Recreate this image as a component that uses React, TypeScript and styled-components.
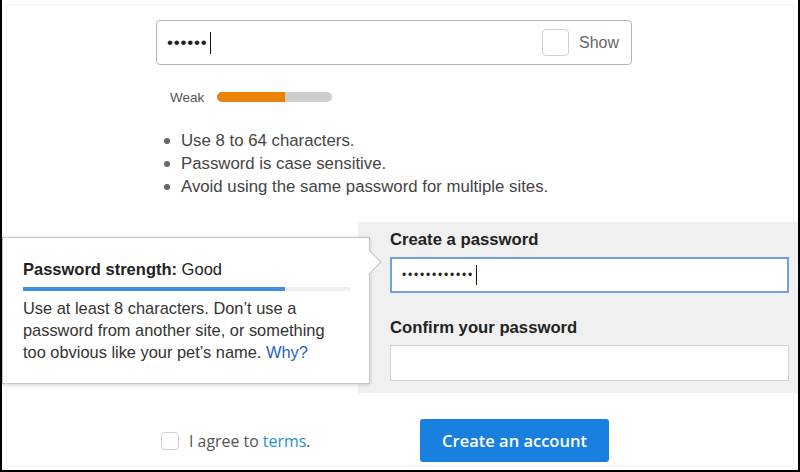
import React from "react";
import styled, { createGlobalStyle } from "styled-components";

const Global = createGlobalStyle`
  html, body { margin: 0; padding: 0; background: #000; }
  * { box-sizing: border-box; }
`;

const Page = styled.div`
  position: relative;
  width: 800px;
  height: 472px;
  background: #fff;
  border-left: 2px solid #000;
  border-right: 2px solid #000;
  border-bottom: 2px solid #000;
  padding-top: 20px;
  font-family: "Liberation Sans", Arial, sans-serif;
  overflow: hidden;
  &::after {
    content: "";
    position: absolute;
    left: 4px;
    top: 4px;
    right: 4px;
    bottom: 4px;
    border: 1px solid #f2f2f2;
    pointer-events: none;
  }
`;

const TopSection = styled.div`
  margin-left: 154px;
  width: 476px;
`;

const PwField = styled.div`
  height: 45px;
  border: 1px solid #b5b5b5;
  border-radius: 4px;
  display: flex;
  align-items: center;
  padding: 0 0 0 10px;
`;

const Dots = styled.span<{ $size: number; $spacing: number }>`
  font-size: ${(p) => p.$size}px;
  letter-spacing: ${(p) => p.$spacing}px;
  color: #222;
  line-height: 1;
`;

const Caret = styled.span<{ $h: number }>`
  display: inline-block;
  width: 1px;
  height: ${(p) => p.$h}px;
  background: #111;
  margin-left: 2px;
`;

const Spacer = styled.div`
  flex: 1;
`;

const ShowBox = styled.span`
  width: 27px;
  height: 27px;
  border: 1px solid #cfcfcf;
  border-radius: 4px;
  margin-right: 10px;
`;

const ShowLabel = styled.span`
  font-size: 16px;
  color: #666;
  margin-right: 12px;
`;

const StrengthRow = styled.div`
  margin-top: 26px;
  margin-left: 14px;
  height: 12px;
  display: flex;
  align-items: center;
  gap: 13px;
`;

const WeakLabel = styled.span`
  font-size: 13.5px;
  color: #555;
`;

const Meter = styled.div`
  width: 115px;
  height: 10px;
  border-radius: 5px;
  background: #cdcdcd;
  overflow: hidden;
`;

const MeterFill = styled.div<{ $color: string }>`
  height: 100%;
  background: ${(p) => p.$color};
`;

const Rules = styled.ul`
  margin: 26px 0 0 0;
  padding: 0 0 0 25px;
  list-style: none;
`;

const Rule = styled.li`
  position: relative;
  font-size: 16.8px;
  line-height: 23px;
  color: #444;
  &::before {
    content: "";
    position: absolute;
    left: -17px;
    top: 9px;
    width: 6px;
    height: 6px;
    border-radius: 50%;
    background: #666;
  }
`;

const Middle = styled.div`
  position: relative;
  margin-top: 24px;
  display: flex;
  justify-content: flex-end;
`;

const Panel = styled.div`
  width: 440px;
  background: #f0f0f0;
  padding: 8px 9px 12px 32px;
  display: flex;
  flex-direction: column;
`;

const FieldLabel = styled.label<{ $gapTop?: number }>`
  font-size: 16.7px;
  line-height: 20px;
  font-weight: bold;
  color: #222;
  margin-top: ${(p) => p.$gapTop ?? 0}px;
`;

const TextBox = styled.div<{ $focused?: boolean }>`
  margin-top: 7px;
  height: 36px;
  background: #fff;
  border: ${(p) => (p.$focused ? "2px solid #6f9fe6" : "1px solid #d2d2d2")};
  display: flex;
  align-items: center;
  padding-left: ${(p) => (p.$focused ? 10 : 11)}px;
`;

const Tooltip = styled.div`
  position: absolute;
  left: 0;
  top: 15px;
  width: 368px;
  height: 147px;
  background: #fff;
  border: 1px solid #c4c4c4;
  box-shadow: 0 1px 4px rgba(0, 0, 0, 0.18);
  padding: 21px 20px 0 20px;
  color: #333;
  &::after {
    content: "";
    position: absolute;
    right: -9px;
    top: 15px;
    width: 17px;
    height: 17px;
    background: #fff;
    border-top: 1px solid #c4c4c4;
    border-right: 1px solid #c4c4c4;
    transform: rotate(45deg);
  }
`;

const TipTitle = styled.div`
  font-size: 16.5px;
  line-height: 20px;
  color: #222;
  b {
    font-weight: bold;
  }
`;

const TipMeter = styled.div`
  margin-top: 8px;
  width: 327px;
  height: 4px;
  background: #efefef;
`;

const TipText = styled.p`
  margin: 6px 0 0 0;
  width: 327px;
  font-size: 16.4px;
  line-height: 22px;
  color: #333;
`;

const Link = styled.a`
  color: #1f63bf;
  text-decoration: none;
`;

const Bottom = styled.div`
  margin-top: 26px;
  display: flex;
  align-items: center;
`;

const Agree = styled.label`
  margin-left: 159px;
  display: flex;
  align-items: center;
  gap: 10px;
  font-family: "Open Sans", "Liberation Sans", sans-serif;
  font-size: 15.9px;
  color: #555;
  width: 259px;
`;

const Check = styled.span`
  width: 18px;
  height: 18px;
  border: 1px solid #cfcfcf;
  border-radius: 4px;
  background: #fff;
`;

const TermsLink = styled.a`
  color: #2b8bd0;
  text-decoration: none;
`;

const Button = styled.button`
  width: 189px;
  height: 43px;
  border: none;
  border-radius: 3px;
  background: #1a80e0;
  color: #fff;
  font-family: "Open Sans", "Liberation Sans", sans-serif;
  font-weight: 600;
  font-size: 16.5px;
  cursor: pointer;
`;

export default function App() {
  return (
    <Page>
      <Global />
      <TopSection>
        <PwField>
          <Dots $size={17} $spacing={0.8}>••••••</Dots>
          <Caret $h={22} />
          <Spacer />
          <ShowBox />
          <ShowLabel>Show</ShowLabel>
        </PwField>
        <StrengthRow>
          <WeakLabel>Weak</WeakLabel>
          <Meter>
            <MeterFill $color="#eb8209" style={{ width: "59%" }} />
          </Meter>
        </StrengthRow>
        <Rules>
          <Rule>Use 8 to 64 characters.</Rule>
          <Rule>Password is case sensitive.</Rule>
          <Rule>Avoid using the same password for multiple sites.</Rule>
        </Rules>
      </TopSection>
      <Middle>
        <Panel>
          <FieldLabel>Create a password</FieldLabel>
          <TextBox $focused>
            <Dots $size={12} $spacing={1.8}>••••••••••••</Dots>
            <Caret $h={20} />
          </TextBox>
          <FieldLabel $gapTop={25}>Confirm your password</FieldLabel>
          <TextBox />
        </Panel>
        <Tooltip>
          <TipTitle>
            <b>Password strength:</b> Good
          </TipTitle>
          <TipMeter>
            <MeterFill $color="#3d8fe0" style={{ width: "80%" }} />
          </TipMeter>
          <TipText>
            Use at least 8 characters. Don’t use a password from another site,
            or something too obvious like your pet’s name. <Link>Why?</Link>
          </TipText>
        </Tooltip>
      </Middle>
      <Bottom>
        <Agree>
          <Check />
          <span>
            I agree to <TermsLink>terms</TermsLink>.
          </span>
        </Agree>
        <Button>Create an account</Button>
      </Bottom>
    </Page>
  );
}
